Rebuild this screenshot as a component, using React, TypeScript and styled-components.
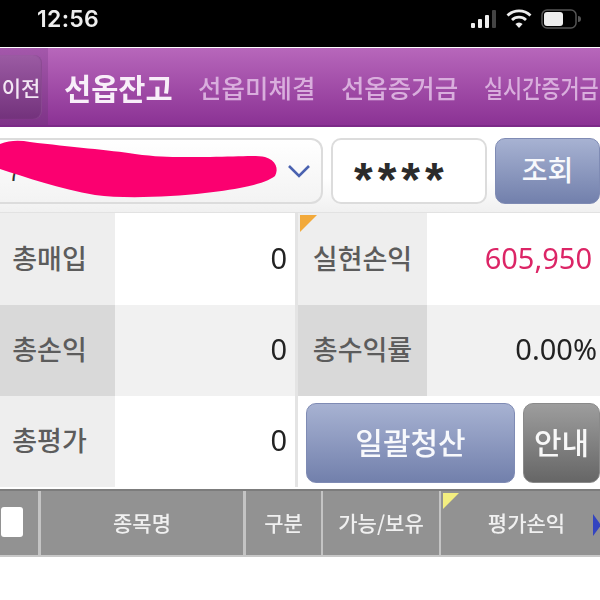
import React, {FC} from 'react';
import styled, {createGlobalStyle} from 'styled-components';

const Global = createGlobalStyle`
  html, body {
    margin: 0;
    padding: 0;
    background: linear-gradient(#000 47px, #fff 47px);
  }
  body {
    width: 600px;
    height: 600px;
    overflow: hidden;
    font-family: "Noto Sans CJK KR", "Noto Sans", sans-serif;
  }
`;

const Page = styled.div`
  width: 600px;
  height: 600px;
  overflow: hidden;
  filter: blur(0.7px);
`;

const StatusBar = styled.div`
  height: 47px;
  background: #000;
  display: flex;
  align-items: center;
  justify-content: space-between;
  padding: 0 19px 10px 37px;
  box-sizing: border-box;
`;

const Clock = styled.span`
  font-family: "Inter", sans-serif;
  font-size: 23px;
  font-weight: 600;
  color: #eee;
  letter-spacing: 0.3px;
`;

const StatusIcons = styled.div`
  display: flex;
  align-items: center;
  gap: 9px;
`;

const Nav = styled.div`
  height: 79px;
  margin-top: 1px;
  display: flex;
  align-items: center;
  overflow: hidden;
  position: relative;
  background: linear-gradient(#b767bb, #8b3294);
  border-bottom: 2px solid #7c2a88;
  box-sizing: border-box;
`;

const PrevPanel = styled.div`
  width: 48px;
  height: 100%;
  flex: none;
  display: flex;
  align-items: center;
  box-sizing: border-box;
  padding-right: 6px;
  background: linear-gradient(#a458ab, #7e3388);
`;

const PrevButton = styled.div`
  width: 42px;
  height: 64px;
  border-radius: 0 8px 8px 0;
  background: linear-gradient(#9b5ba3, #73327c);
  box-shadow: inset -1px 0 1px #8b4a93;
  color: #f3e6f4;
  font-size: 21px;
  font-weight: 500;
  display: flex;
  align-items: center;
  justify-content: center;
  white-space: nowrap;
`;

const Tab = styled.div<{$active?: boolean; $squeezed?: boolean}>`
  flex: none;
  white-space: nowrap;
  margin-left: ${p => (p.$active ? '16px' : '25.5px')};
  color: ${p => (p.$active ? '#f8eef9' : '#d9aedd')};
  font-size: ${p => (p.$active ? '29.5px' : '25.5px')};
  font-weight: ${p => (p.$active ? 700 : 500)};
  transform: ${p => (p.$squeezed ? 'scaleX(0.815)' : 'none')};
  transform-origin: left center;
`;

const SearchRow = styled.div`
  position: relative;
  height: 85px;
  box-sizing: border-box;
  padding: 11px 0 8px;
  display: flex;
  gap: 8px;
  background: linear-gradient(#fff 60%, #f0f0f0);
`;

const Select = styled.div`
  width: 323px;
  flex: none;
  box-sizing: border-box;
  border: 2px solid #dcdcdc;
  border-left: none;
  border-radius: 0 12px 12px 0;
  background: linear-gradient(#fff, #f3f3f3);
  display: flex;
  align-items: center;
  justify-content: space-between;
  padding: 0 9px 0 8px;
  color: #333;
  font-size: 22px;
`;

const Scribble = styled.svg`
  position: absolute;
  left: 0;
  top: 0;
`;

const Password = styled.div`
  width: 156px;
  flex: none;
  box-sizing: border-box;
  border: 2px solid #dcdcdc;
  border-radius: 10px;
  background: #fff;
  padding: 17px 0 0 21px;
  color: #2b2b2b;
  font-family: "Liberation Sans", sans-serif;
  font-size: 48px;
  font-weight: 700;
  letter-spacing: 5px;
  line-height: 1;
  display: flex;
  align-items: center;
`;

const BlueButton = styled.div<{$large?: boolean}>`
  flex: ${p => (p.$large ? '0 0 209px' : '1')};
  border-radius: 10px;
  border: 1px solid #7f8bb4;
  background: linear-gradient(#a7b2d2, #7280ac);
  color: #f8f9fc;
  font-size: ${p => (p.$large ? '30px' : '28px')};
  font-weight: 500;
  padding-bottom: 4px;
  display: flex;
  align-items: center;
  justify-content: center;
  box-sizing: border-box;
`;

const GreyButton = styled.div`
  flex: 1;
  border-radius: 10px;
  border: 1px solid #8a8a8a;
  background: linear-gradient(#9d9d9d, #666);
  color: #f8f8f8;
  font-size: 30px;
  font-weight: 500;
  padding-bottom: 4px;
  display: flex;
  align-items: center;
  justify-content: center;
  box-sizing: border-box;
`;

const Summary = styled.div`
  display: grid;
  grid-template-columns: 115px 180px 3px 129px 173px;
  grid-template-rows: 92px 91px 91px;
  border-top: 1px solid #e2e2e2;
  background: #fff;
`;

const Label = styled.div<{$dark?: boolean; $shift?: boolean}>`
  position: relative;
  background: ${p => (p.$dark ? '#d9d9d9' : '#eeeeee')};
  color: #5c5c5c;
  font-size: 27px;
  font-weight: 500;
  display: flex;
  align-items: center;
  justify-content: center;
  box-sizing: border-box;
  padding-bottom: 4px;
  padding-right: ${p => (p.$shift ? '16px' : '0')};
`;

const Value = styled.div<{$dark?: boolean; $red?: boolean; $pad?: number}>`
  background: ${p => (p.$dark ? '#f1f1f1' : '#fff')};
  color: ${p => (p.$red ? '#dc2566' : '#222')};
  font-family: "Noto Sans", sans-serif;
  font-size: 29px;
  display: flex;
  align-items: center;
  justify-content: flex-end;
  padding-right: ${p => p.$pad ?? 8}px;
  padding-bottom: 4px;
  box-sizing: border-box;
`;

const Divider = styled.div`
  background: #e4e4e4;
`;

const Actions = styled.div`
  grid-column: 4 / 6;
  display: flex;
  gap: 8px;
  padding: 7px 0 4px 8px;
  background: #fff;
`;

const Corner = styled.span<{$color: string; $size: number}>`
  position: absolute;
  left: 2px;
  top: 2px;
  width: 0;
  height: 0;
  border-style: solid;
  border-width: ${p => p.$size}px ${p => p.$size}px 0 0;
  border-color: ${p => p.$color} transparent transparent transparent;
`;

const TableHead = styled.div`
  display: flex;
  height: 68px;
  margin-top: 2px;
  background: #929292;
  border-top: 2px solid #7c7c7c;
  border-bottom: 2px solid #c8c8c8;
  box-sizing: border-box;
`;

const HeadCell = styled.div<{$width: number; $thick?: boolean; $last?: boolean}>`
  position: relative;
  flex: none;
  width: ${p => p.$width}px;
  box-sizing: border-box;
  border-right: ${p => (p.$last ? 'none' : `${p.$thick ? 3 : 2}px solid #c4c4c4`)};
  padding-left: ${p => (p.$last ? '12px' : '0')};
  padding-bottom: 2px;
  color: #f0f0f0;
  font-size: 21px;
  font-weight: 500;
  display: flex;
  align-items: center;
  justify-content: center;
`;

const Check = styled.span`
  width: 22px;
  height: 30px;
  margin-left: -14px;
  background: #fff;
  border-radius: 3px;
`;

const SortMark = styled.span`
  position: absolute;
  right: -1px;
  top: 23px;
  width: 0;
  height: 0;
  border-style: solid;
  border-width: 11px 0 11px 8px;
  border-color: transparent transparent transparent #3344c0;
`;

const SignalIcon: FC = () => (
  <svg width="26" height="20" viewBox="0 0 26 20">
    <rect x="0" y="14" width="4" height="5" rx="1" fill="#eee" />
    <rect x="7" y="10" width="4" height="9" rx="1" fill="#eee" />
    <rect x="14" y="6" width="4" height="13" rx="1" fill="#eee" />
    <rect x="21" y="1" width="4" height="18" rx="1" fill="#444" />
  </svg>
);

const WifiIcon: FC = () => (
  <svg width="26" height="20" viewBox="0 0 26 20" fill="none" stroke="#eee" strokeWidth="2.8">
    <path d="M1.5 6.5a16.5 16.5 0 0 1 23 0" />
    <path d="M6 11a10 10 0 0 1 14 0" />
    <path d="M13 19l-3.6-4a5 5 0 0 1 7.2 0z" fill="#eee" stroke="none" />
  </svg>
);

const BatteryIcon: FC = () => (
  <svg width="40" height="20" viewBox="0 0 40 20">
    <rect x="1" y="1" width="34" height="18" rx="5" fill="none" stroke="#555" strokeWidth="1.5" />
    <rect x="3" y="3" width="19" height="14" rx="3" fill="#eee" />
    <path d="M37 7a3 3 0 0 1 0 6z" fill="#555" />
  </svg>
);

const App: FC = () => {
  const tabs = ['선옵미체결', '선옵증거금'];

  return (
    <Page>
      <Global />
      <StatusBar>
        <Clock>12:56</Clock>
        <StatusIcons>
          <SignalIcon />
          <WifiIcon />
          <BatteryIcon />
        </StatusIcons>
      </StatusBar>
      <Nav>
        <PrevPanel>
          <PrevButton>이전</PrevButton>
        </PrevPanel>
        <Tab $active>선옵잔고</Tab>
        {tabs.map(t => (
          <Tab key={t}>{t}</Tab>
        ))}
        <Tab $squeezed>실시간증거금</Tab>
      </Nav>
      <SearchRow>
        <Select>
          <span>7</span>
          <svg width="26" height="16" viewBox="0 0 26 16" fill="none" stroke="#4a62b0" strokeWidth="2.6">
            <path d="M3 3l10 10L23 3" />
          </svg>
        </Select>
        <Scribble width="300" height="85" viewBox="0 0 300 85">
          <path
            d="M0 17C10 13 20 13 30 15C70 20 110 23 135 27C165 31 180 30 210 30C235 30 255 28 265 30C276 33 279 42 275 49C265 57 240 62 205 66C170 70 125 72 95 68C60 62 25 50 0 42Z"
            fill="#fb0070"
          />
        </Scribble>
        <Password>****</Password>
        <BlueButton>조회</BlueButton>
      </SearchRow>
      <Summary>
        <Label $shift>총매입</Label>
        <Value>0</Value>
        <Divider />
        <Label>
          <Corner $color="#f2a93a" $size={17} />
          실현손익
        </Label>
        <Value $red>605,950</Value>

        <Label $dark $shift>총손익</Label>
        <Value $dark>0</Value>
        <Divider />
        <Label $dark>총수익률</Label>
        <Value $dark $pad={3}>0.00%</Value>

        <Label $shift>총평가</Label>
        <Value>0</Value>
        <Divider />
        <Actions>
          <BlueButton $large>일괄청산</BlueButton>
          <GreyButton>안내</GreyButton>
        </Actions>
      </Summary>
      <TableHead>
        <HeadCell $width={41} $thick>
          <Check />
        </HeadCell>
        <HeadCell $width={205} $thick>종목명</HeadCell>
        <HeadCell $width={77}>구분</HeadCell>
        <HeadCell $width={118}>가능/보유</HeadCell>
        <HeadCell $width={159} $last>
          <Corner $color="#f3ee80" $size={16} />
          평가손익
          <SortMark />
        </HeadCell>
      </TableHead>
    </Page>
  );
};

export default App;
